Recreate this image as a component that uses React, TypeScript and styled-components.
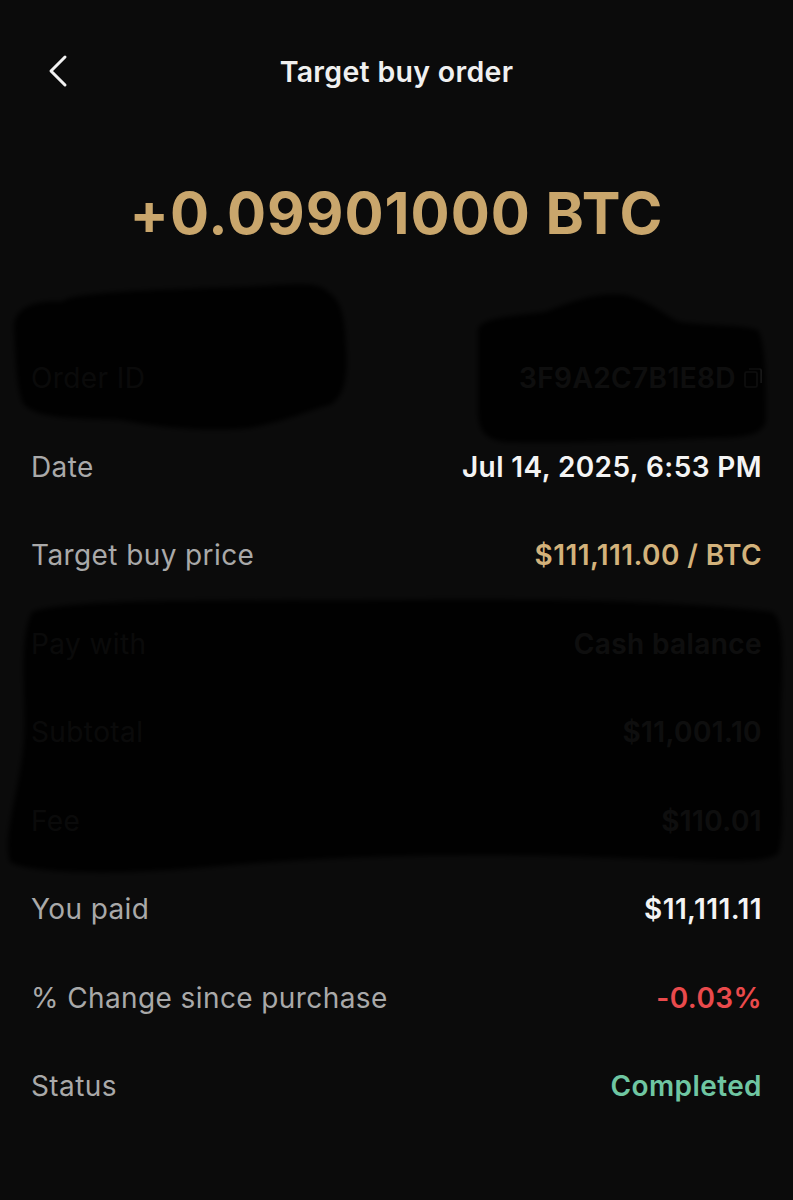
import React from "react";
import styled, { createGlobalStyle } from "styled-components";

const Global = createGlobalStyle`
  html, body { margin: 0; padding: 0; background: #0b0b0b; }
  body { font-family: Inter, "Noto Sans", "Liberation Sans", sans-serif; -webkit-font-smoothing: antialiased; }
`;

const Page = styled.div`
  position: relative;
  width: 793px;
  min-height: 1200px;
  background: #0b0b0b;
  overflow: hidden;
`;

const Header = styled.header`
  height: 142px;
  display: flex;
  align-items: center;
  justify-content: center;
  position: relative;
`;

const BackButton = styled.button`
  position: absolute;
  left: 38px;
  top: 50px;
  width: 40px;
  height: 42px;
  background: none;
  border: 0;
  padding: 0;
  display: flex;
  align-items: center;
  justify-content: center;
  color: #f2f2f2;
`;

const Title = styled.h1`
  margin: 0;
  font-size: 28.5px;
  font-weight: 600;
  color: #f0f0f0;
  letter-spacing: 0.3px;
`;

const Amount = styled.div`
  height: 142px;
  display: flex;
  align-items: center;
  justify-content: center;
  font-size: 58px;
  font-weight: 700;
  color: #c9a66c;
  letter-spacing: 1px;
`;

const List = styled.div`
  margin-top: 50px;
  display: flex;
  flex-direction: column;
`;

const Row = styled.div`
  height: 88.5px;
  display: flex;
  align-items: center;
  justify-content: space-between;
  padding: 0 31px;
  font-size: 28px;
  letter-spacing: 0.4px;
`;

const Label = styled.span`
  color: #a9a9a9;
  font-weight: 400;
`;

const Value = styled.span<{ $tone?: "white" | "gold" | "red" | "green" }>`
  display: flex;
  align-items: center;
  gap: 8px;
  font-weight: 600;
  color: ${(p) =>
    p.$tone === "gold"
      ? "#d3b27b"
      : p.$tone === "red"
      ? "#ea4a4c"
      : p.$tone === "green"
      ? "#6fc6a2"
      : "#f4f4f4"};
`;

const Redactions = styled.svg`
  position: absolute;
  left: 0;
  top: 0;
  pointer-events: none;
`;

const rows: { label: string; value: string; tone?: "white" | "gold" | "red" | "green"; copy?: boolean }[] = [
  { label: "Order ID", value: "3F9A2C7B1E8D", copy: true },
  { label: "Date", value: "Jul 14, 2025, 6:53 PM" },
  { label: "Target buy price", value: "$111,111.00 / BTC", tone: "gold" },
  { label: "Pay with", value: "Cash balance" },
  { label: "Subtotal", value: "$11,001.10" },
  { label: "Fee", value: "$110.01" },
  { label: "You paid", value: "$11,111.11" },
  { label: "% Change since purchase", value: "-0.03%", tone: "red" },
  { label: "Status", value: "Completed", tone: "green" },
];

export default function App() {
  return (
    <Page>
      <Global />
      <Header>
        <BackButton aria-label="Back">
          <svg width="22" height="34" viewBox="0 0 22 34" fill="none">
            <path d="M18 3 L4 17 L18 31" stroke="currentColor" strokeWidth="3" strokeLinecap="round" strokeLinejoin="round" />
          </svg>
        </BackButton>
        <Title>Target buy order</Title>
      </Header>
      <Amount>+0.09901000 BTC</Amount>
      <List>
        {rows.map((r) => (
          <Row key={r.label}>
            <Label>{r.label}</Label>
            <Value $tone={r.tone}>
              {r.value}
              {r.copy && (
                <svg width="18" height="20" viewBox="0 0 18 20" fill="none">
                  <rect x="1" y="4" width="12" height="15" rx="1.5" stroke="currentColor" strokeWidth="1.6" />
                  <path d="M5 1 H15.5 A1.5 1.5 0 0 1 17 2.5 V15" stroke="currentColor" strokeWidth="1.6" />
                </svg>
              )}
            </Value>
          </Row>
        ))}
      </List>
      <Redactions width="793" height="1200" viewBox="0 0 793 1200">
        <defs>
          <filter id="soft" x="-5%" y="-5%" width="110%" height="110%">
            <feGaussianBlur stdDeviation="2.5" />
          </filter>
        </defs>
        <g fill="rgba(0,0,0,0.94)" filter="url(#soft)">
          <path d="M14 330 C12 305 40 300 62 302 C70 292 150 290 240 287 C290 285 318 280 328 292 C342 300 345 320 346 345 C348 375 346 395 330 405 C310 410 290 420 250 428 C210 432 160 428 120 420 C80 418 40 420 24 405 C16 390 16 360 14 330 Z" />
          <path d="M478 330 C480 318 510 316 545 312 C575 300 600 292 625 295 C650 300 668 318 680 322 C710 326 745 325 758 330 C766 345 766 380 766 420 C764 436 740 438 715 438 C650 440 570 444 505 442 C485 440 478 430 478 410 Z" />
          <path d="M32 612 C70 598 220 601 400 600 C560 598 700 602 772 612 C785 618 783 660 781 710 C780 770 786 820 779 852 C772 866 700 860 620 858 C470 852 330 856 220 866 C120 876 30 874 10 862 C2 835 20 790 24 740 C26 690 18 640 32 612 Z" />
        </g>
      </Redactions>
    </Page>
  );
}
